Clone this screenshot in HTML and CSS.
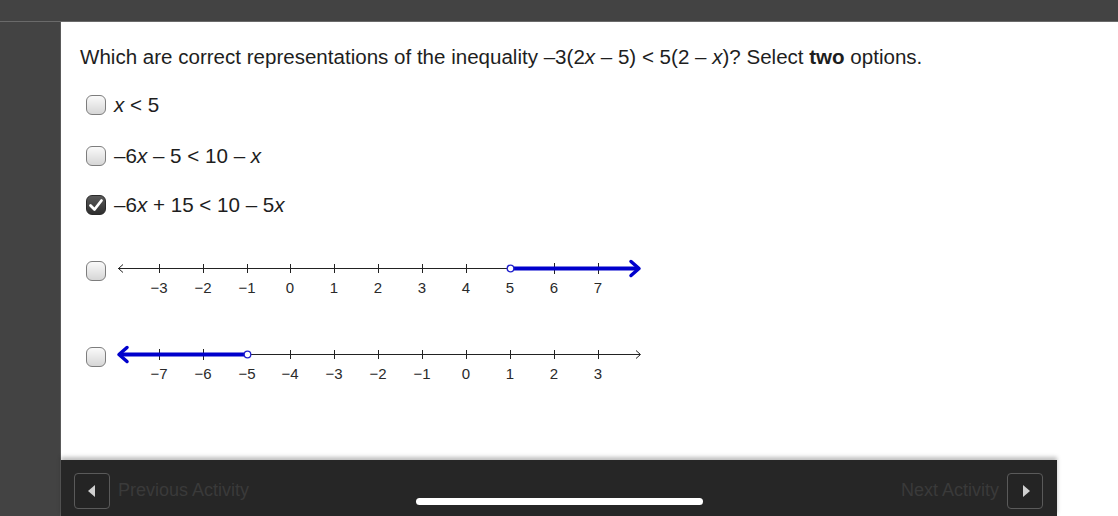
FILE: index.html
```html
<!DOCTYPE html>
<html>
<head>
<meta charset="utf-8">
<link rel="stylesheet" href="styles.css">
</head>
<body>
<div class="topbar"></div>
<div class="main">
  <div class="sidebar"></div>
  <div class="panel">
    <div class="content">
      <p class="question">Which are correct representations of the inequality –3(2<i>x</i> – 5) &lt; 5(2 – <i>x</i>)? Select <b>two</b> options.</p>
      <div class="option opt1"><span class="box"></span><span class="label"><i>x</i> &lt; 5</span></div>
      <div class="option opt2"><span class="box"></span><span class="label">–6<i>x</i> – 5 &lt; 10 – <i>x</i></span></div>
      <div class="option opt3"><span class="box checked"><svg viewBox="0 0 20 20" width="20" height="20"><path d="M4.5 10.5 L8.5 14.5 L15.5 5.5" fill="none" stroke="#fff" stroke-width="2.8" stroke-linecap="round" stroke-linejoin="round"/></svg></span><span class="label">–6<i>x</i> + 15 &lt; 10 – 5<i>x</i></span></div>

      <div class="option nl nl1"><span class="box"></span>
        <svg class="numline" width="540" height="42" viewBox="0 0 540 42">
          <line x1="8" y1="10.5" x2="520" y2="10.5" stroke="#222" stroke-width="1"/>
          <path d="M13 6.5 L8.5 10.5 L13 14.5" fill="none" stroke="#222" stroke-width="1"/>
          <g stroke="#222" stroke-width="1">
            <line x1="49.5" y1="6" x2="49.5" y2="15"/><line x1="93.5" y1="6" x2="93.5" y2="15"/><line x1="137.5" y1="6" x2="137.5" y2="15"/><line x1="180.5" y1="6" x2="180.5" y2="15"/><line x1="224.5" y1="6" x2="224.5" y2="15"/><line x1="268.5" y1="6" x2="268.5" y2="15"/><line x1="312.5" y1="6" x2="312.5" y2="15"/><line x1="356.5" y1="6" x2="356.5" y2="15"/><line x1="444.5" y1="5" x2="444.5" y2="16"/><line x1="488.5" y1="5" x2="488.5" y2="16"/>
          </g>
          <line x1="400" y1="10.5" x2="528" y2="10.5" stroke="#0000cc" stroke-width="4"/>
          <path d="M521 3.5 L529 10.5 L521 17.5" fill="none" stroke="#0000cc" stroke-width="3.5" stroke-linecap="round" stroke-linejoin="round"/>
          <circle cx="400.5" cy="10.5" r="3.3" fill="#fff" stroke="#2222cc" stroke-width="1.3"/>
          <g class="nums" text-anchor="middle">
            <text x="49" y="35">−3</text><text x="93" y="35">−2</text><text x="137" y="35">−1</text><text x="180" y="35">0</text><text x="224" y="35">1</text><text x="268" y="35">2</text><text x="312" y="35">3</text><text x="356" y="35">4</text><text x="400" y="35">5</text><text x="444" y="35">6</text><text x="488" y="35">7</text>
          </g>
        </svg>
      </div>

      <div class="option nl nl2"><span class="box"></span>
        <svg class="numline" width="540" height="42" viewBox="0 0 540 42">
          <line x1="10" y1="10.5" x2="530" y2="10.5" stroke="#222" stroke-width="1"/>
          <path d="M526 6.5 L530.5 10.5 L526 14.5" fill="none" stroke="#222" stroke-width="1"/>
          <g stroke="#222" stroke-width="1">
            <line x1="49.5" y1="5" x2="49.5" y2="16"/><line x1="93.5" y1="5" x2="93.5" y2="16"/><line x1="180.5" y1="6" x2="180.5" y2="15"/><line x1="224.5" y1="6" x2="224.5" y2="15"/><line x1="268.5" y1="6" x2="268.5" y2="15"/><line x1="312.5" y1="6" x2="312.5" y2="15"/><line x1="356.5" y1="6" x2="356.5" y2="15"/><line x1="400.5" y1="6" x2="400.5" y2="15"/><line x1="444.5" y1="6" x2="444.5" y2="15"/><line x1="488.5" y1="6" x2="488.5" y2="15"/>
          </g>
          <line x1="10" y1="10.5" x2="137" y2="10.5" stroke="#0000cc" stroke-width="4"/>
          <path d="M17 3.5 L9 10.5 L17 17.5" fill="none" stroke="#0000cc" stroke-width="3.5" stroke-linecap="round" stroke-linejoin="round"/>
          <circle cx="137.5" cy="10.5" r="3.3" fill="#fff" stroke="#2222cc" stroke-width="1.3"/>
          <g class="nums" text-anchor="middle">
            <text x="49" y="35">−7</text><text x="93" y="35">−6</text><text x="137" y="35">−5</text><text x="180" y="35">−4</text><text x="224" y="35">−3</text><text x="268" y="35">−2</text><text x="312" y="35">−1</text><text x="356" y="35">0</text><text x="400" y="35">1</text><text x="444" y="35">2</text><text x="488" y="35">3</text>
          </g>
        </svg>
      </div>
    </div>
    <div class="footer">
      <div class="nav prev"><span class="btn"><span class="tri left"></span></span><span class="navtext">Previous Activity</span></div>
      <div class="nav next"><span class="navtext">Next Activity</span><span class="btn"><span class="tri right"></span></span></div>
    </div>
  </div>
</div>
<div class="home-indicator"></div>
</body>
</html>
```

FILE: styles.css
```css
html, body {
  margin: 0;
  padding: 0;
}
body {
  width: 1118px;
  height: 516px;
  overflow: hidden;
  background: #434343;
  font-family: "Liberation Sans", Arial, Helvetica, sans-serif;
  color: #1e1e1e;
  position: relative;
}
.topbar {
  height: 21px;
  background: #434343;
  border-bottom: 1px solid #6a6a6a;
}
.main {
  display: flex;
  height: 494px;
}
.sidebar {
  width: 60px;
  background: #434343;
  border-right: 1px solid #5a5a5a;
  flex: none;
}
.panel {
  flex: 1;
  background: #fff;
  display: flex;
  flex-direction: column;
}
.content {
  flex: 1;
  padding: 23px 0 0 19px;
}
.question {
  margin: 0;
  font-size: 20.55px;
  line-height: 24px;
}
.question b { font-weight: bold; }
.option {
  display: flex;
  align-items: center;
  margin-left: 6px;
  font-size: 20.6px;
  line-height: 24px;
}
.opt1 { margin-top: 24px; }
.opt2 { margin-top: 27px; }
.opt3 { margin-top: 25px; }
.label { margin-left: 8px; }
.box {
  width: 20px;
  height: 20px;
  box-sizing: border-box;
  border: 1.5px solid #7d7d7d;
  border-radius: 6px;
  background: linear-gradient(#fafafa, #d6d6d6);
  flex: none;
  display: flex;
}
.box.checked {
  background: linear-gradient(#5a5a5a, #2e2e2e);
  border-color: #2a2a2a;
}
.box.checked svg { margin: -1.5px; }
.nl {
  align-items: flex-start;
}
.nl .box { margin-top: 3px; }
.nl1 { margin-top: 41px; }
.nl2 { margin-top: 44px; }
.numline {
  margin-left: 4px;
  display: block;
}
.nums text {
  font-family: "Liberation Sans", Arial, sans-serif;
  font-size: 15px;
  fill: #2a2a2a;
}
.footer {
  width: 996px;
  height: 56px;
  background: #262626;
  box-shadow: 0 -3px 4px rgba(0,0,0,0.25);
  display: flex;
  align-items: center;
  justify-content: space-between;
  padding: 5px 14px 0 13px;
  box-sizing: border-box;
}
.nav {
  display: flex;
  align-items: center;
}
.btn {
  width: 36px;
  height: 36px;
  box-sizing: border-box;
  border: 1px solid #5a5a5a;
  border-radius: 4px;
  background: #242424;
  display: flex;
  align-items: center;
  justify-content: center;
}
.tri {
  width: 0;
  height: 0;
  border-top: 6px solid transparent;
  border-bottom: 6px solid transparent;
}
.tri.left { border-right: 7px solid #d0d0d0; margin-right: 2px; }
.tri.right { border-left: 7px solid #d0d0d0; margin-left: 2px; }
.navtext {
  font-size: 18px;
  color: #3a3a3a;
}
.prev .navtext { margin-left: 8px; }
.next .navtext { margin-right: 8px; }
.home-indicator {
  position: absolute;
  left: 416px;
  top: 498px;
  width: 287px;
  height: 7px;
  border-radius: 4px;
  background: #fff;
}
```
